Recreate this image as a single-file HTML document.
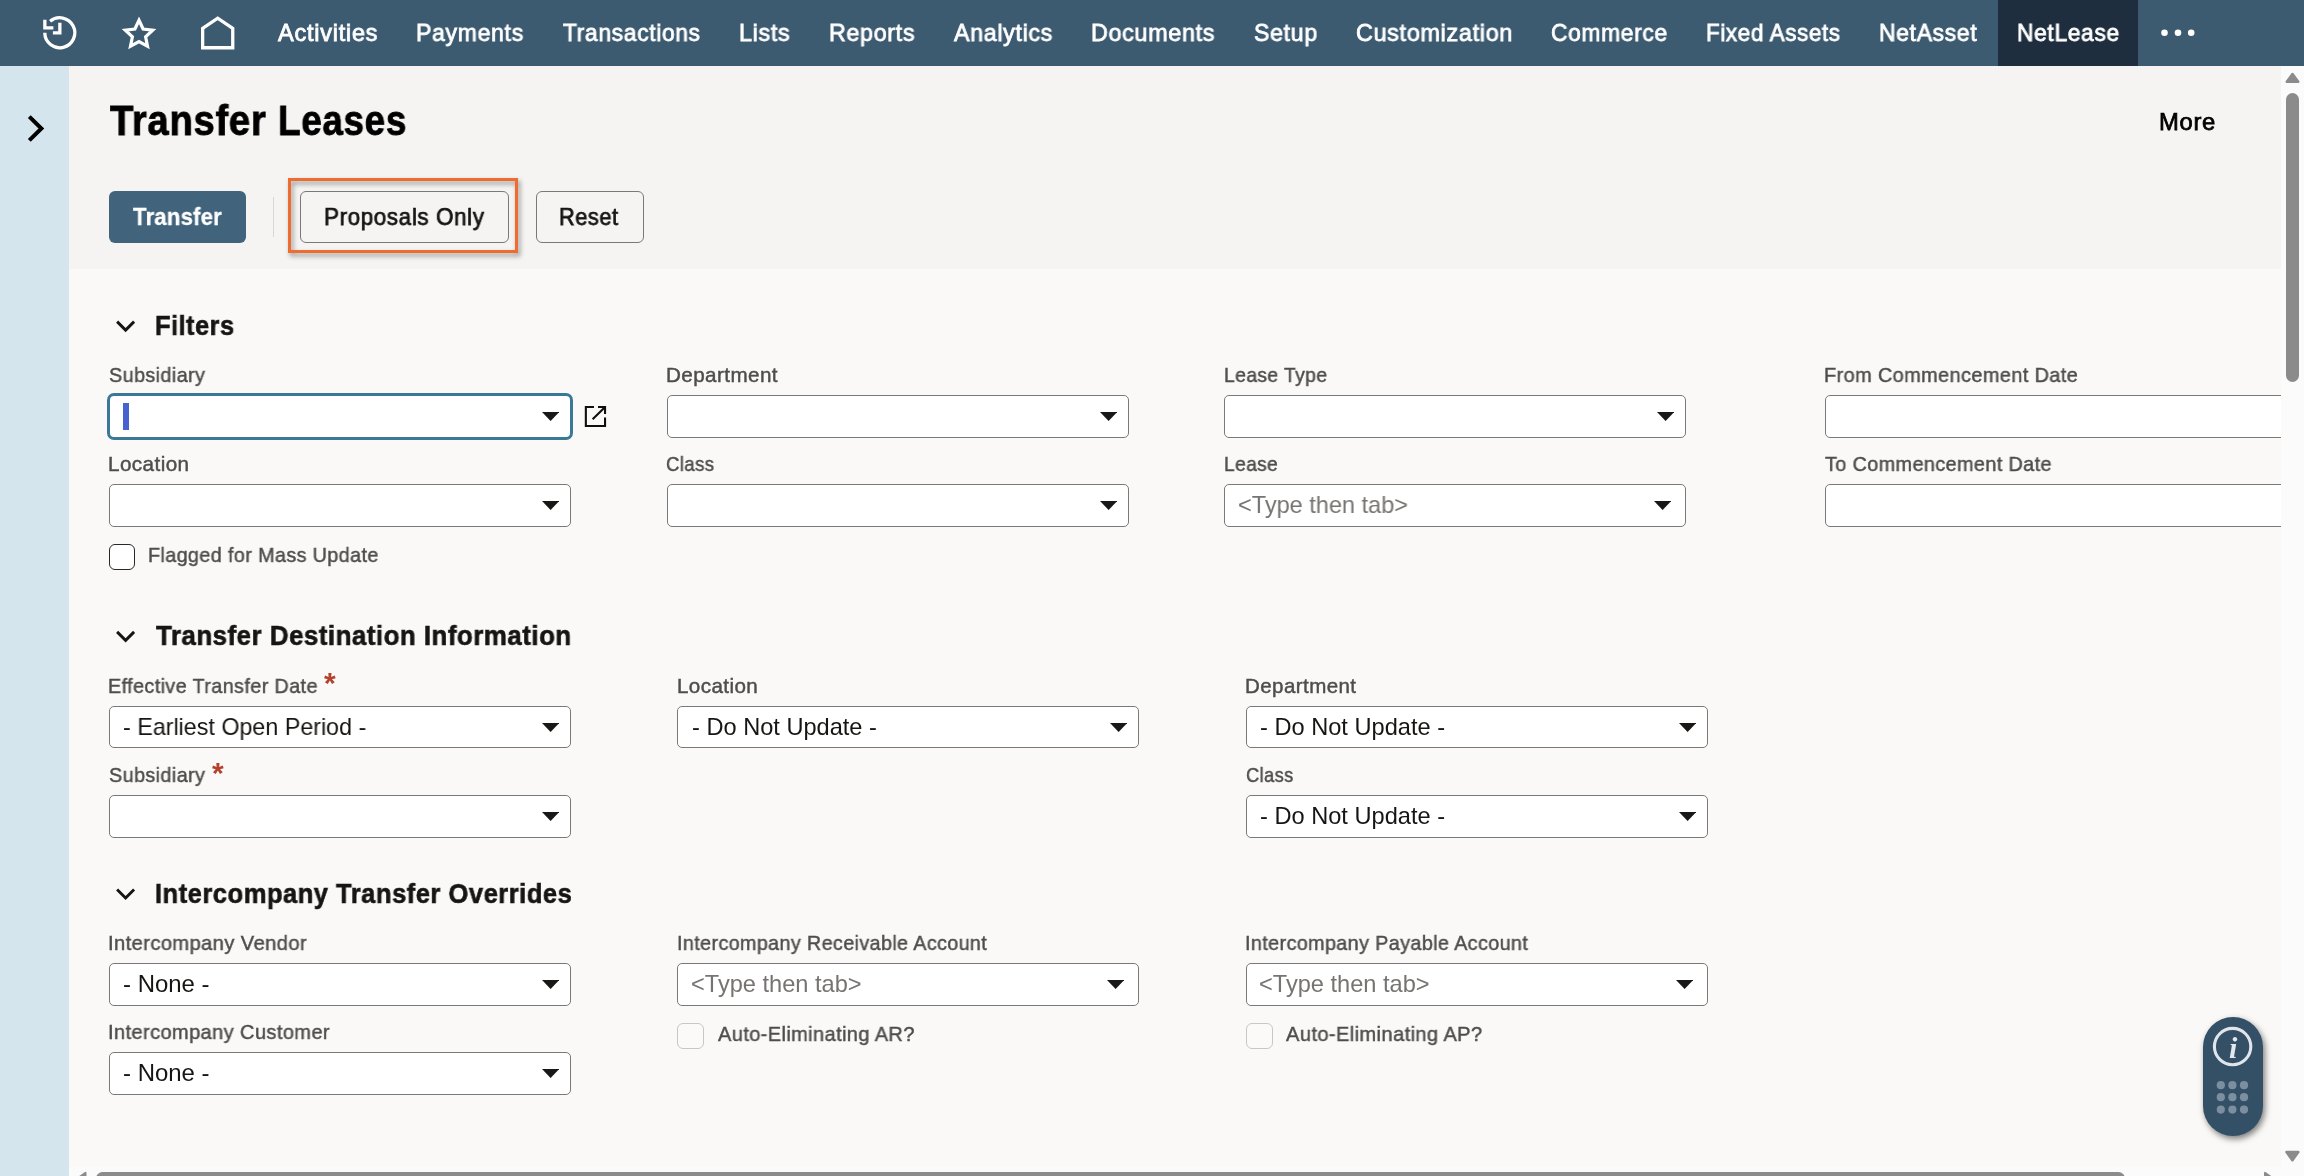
<!DOCTYPE html>
<html lang="en">
<head>
<meta charset="utf-8">
<title>Transfer Leases</title>
<style>
html,body{margin:0;padding:0;}
body{width:2304px;height:1176px;overflow:hidden;position:relative;background:#faf9f8;font-family:"Liberation Sans",sans-serif;}
.a{position:absolute;box-sizing:border-box;}
.t{position:absolute;white-space:pre;transform-origin:0 50%;will-change:transform;font-family:"Liberation Sans",sans-serif;}
#nav{left:0;top:0;width:2304px;height:66px;background:#3c5a70;}
#navact{left:1998px;top:0;width:140px;height:66px;background:#1f2e3f;}
#side{left:0;top:66px;width:69px;height:1110px;background:#d4e5ee;}
#head{left:69px;top:66px;width:2212px;height:203px;background:#f5f4f2;}
#main{left:69px;top:269px;width:2212px;height:898px;background:#faf9f8;overflow:hidden;}
.sel{width:462px;height:43px;background:#fff;border:1px solid #7b7977;border-radius:5px;}
.sel.focus{width:466px;height:47px;border:3px solid #3a7898;border-radius:7px;}
.btn{height:52px;top:191px;border-radius:6px;border:1px solid #7b7977;background:#f5f4f2;}
.cb{width:26px;height:26px;border-radius:6px;background:#fff;border:1.5px solid #2a2826;}
.cb.dis{width:27px;border:1px solid #c9c7c5;background:#fbfaf9;}
.ast{color:#b3412c;font-weight:700;font-size:30px;line-height:30px;}
</style>
</head>
<body>
<!-- top navigation -->
<div class="a" id="nav"></div>
<div class="a" id="navact"></div>
<svg class="a" style="left:40px;top:12px" width="42" height="42" viewBox="40 12 42 42" fill="none" stroke="#fff" stroke-width="3.3">
  <path d="M50.1 21.3 A15 15 0 1 1 44.8 32.8"/>
  <path d="M44.85 19.8V27.8H53.4"/>
  <path d="M59.85 22.7V32.95H52.9"/>
</svg>
<svg class="a" style="left:118px;top:12px" width="42" height="42" viewBox="118 12 42 42" fill="none" stroke="#fff" stroke-width="3.2" stroke-linejoin="miter">
  <path d="M139.0 20.2 L143.1 29.0 L152.7 30.2 L145.6 36.7 L147.5 46.2 L139.0 41.5 L130.5 46.2 L132.4 36.7 L125.3 30.2 L134.9 29.0 Z"/>
</svg>
<svg class="a" style="left:196px;top:12px" width="42" height="42" viewBox="196 12 42 42" fill="none" stroke="#fff" stroke-width="3.3" stroke-linejoin="miter">
  <path d="M202.65 47.75V28.3L217.7 18.2L232.75 28.3V47.75Z"/>
</svg>
<svg class="a" style="left:2158px;top:26px" width="40" height="14" viewBox="2158 26 40 14" fill="#fff">
  <circle cx="2164.5" cy="32.8" r="3.3"/><circle cx="2178" cy="32.8" r="3.3"/><circle cx="2191.2" cy="32.8" r="3.3"/>
</svg>

<!-- left rail -->
<div class="a" id="side"></div>
<svg class="a" style="left:22px;top:110px" width="28" height="38" viewBox="22 110 28 38" fill="none" stroke="#000" stroke-width="4">
  <path d="M29.3 116.6 L41.4 128.5 L29.3 140.4"/>
</svg>

<!-- page header -->
<div class="a" id="head"></div>
<div class="a" id="main"></div>
<div class="a" style="left:109px;top:191px;width:137px;height:52px;border-radius:6px;background:#41647c;"></div>
<div class="a" style="left:273px;top:197px;width:1px;height:40px;background:#d9d6d3;"></div>
<div class="a" style="left:288px;top:178px;width:230px;height:75px;border:3px solid #ee6c2f;filter:drop-shadow(2px 3px 2.5px rgba(0,0,0,.42));"></div>
<div class="a btn" style="left:300px;width:209px;"></div>
<div class="a btn" style="left:536px;width:108px;"></div>

<!-- section chevrons -->
<svg class="a" style="left:112px;top:316px" width="28" height="20" viewBox="112 316 28 20" fill="none" stroke="#161513" stroke-width="2.9"><path d="M117.1 321.6 L125.6 330.1 L134.1 321.6"/></svg>
<svg class="a" style="left:112px;top:626px" width="28" height="20" viewBox="112 626 28 20" fill="none" stroke="#161513" stroke-width="2.9"><path d="M117.1 631.9 L125.6 640.4 L134.1 631.9"/></svg>
<svg class="a" style="left:112px;top:884px" width="28" height="20" viewBox="112 884 28 20" fill="none" stroke="#161513" stroke-width="2.9"><path d="M117.1 889.5 L125.6 898.0 L134.1 889.5"/></svg>

<!-- form controls -->
<div class="a sel focus" style="left:107px;top:393px;"></div>
<svg class="a" style="left:541.8px;top:412px" width="17.2" height="9" viewBox="0 0 17.2 9"><path d="M0 0H17.2L8.6 9Z" fill="#1a1816"/></svg>
<div class="a sel" style="left:667px;top:395px;"></div>
<svg class="a" style="left:1099.8px;top:412px" width="17.2" height="9" viewBox="0 0 17.2 9"><path d="M0 0H17.2L8.6 9Z" fill="#1a1816"/></svg>
<div class="a sel" style="left:1224px;top:395px;"></div>
<svg class="a" style="left:1656.8px;top:412px" width="17.2" height="9" viewBox="0 0 17.2 9"><path d="M0 0H17.2L8.6 9Z" fill="#1a1816"/></svg>
<div class="a sel" style="left:109px;top:484px;"></div>
<svg class="a" style="left:541.8px;top:501px" width="17.2" height="9" viewBox="0 0 17.2 9"><path d="M0 0H17.2L8.6 9Z" fill="#1a1816"/></svg>
<div class="a sel" style="left:667px;top:484px;"></div>
<svg class="a" style="left:1099.8px;top:501px" width="17.2" height="9" viewBox="0 0 17.2 9"><path d="M0 0H17.2L8.6 9Z" fill="#1a1816"/></svg>
<div class="a sel" style="left:1224px;top:484px;"></div>
<svg class="a" style="left:1653.8px;top:501px" width="17.2" height="9" viewBox="0 0 17.2 9"><path d="M0 0H17.2L8.6 9Z" fill="#1a1816"/></svg>
<div class="a sel" style="left:109px;top:706px;height:42px;"></div>
<svg class="a" style="left:541.8px;top:723px" width="17.2" height="9" viewBox="0 0 17.2 9"><path d="M0 0H17.2L8.6 9Z" fill="#1a1816"/></svg>
<div class="a sel" style="left:677px;top:706px;height:42px;"></div>
<svg class="a" style="left:1109.8px;top:723px" width="17.2" height="9" viewBox="0 0 17.2 9"><path d="M0 0H17.2L8.6 9Z" fill="#1a1816"/></svg>
<div class="a sel" style="left:1246px;top:706px;height:42px;"></div>
<svg class="a" style="left:1678.8px;top:723px" width="17.2" height="9" viewBox="0 0 17.2 9"><path d="M0 0H17.2L8.6 9Z" fill="#1a1816"/></svg>
<div class="a sel" style="left:109px;top:795px;"></div>
<svg class="a" style="left:541.8px;top:812px" width="17.2" height="9" viewBox="0 0 17.2 9"><path d="M0 0H17.2L8.6 9Z" fill="#1a1816"/></svg>
<div class="a sel" style="left:1246px;top:795px;"></div>
<svg class="a" style="left:1678.8px;top:812px" width="17.2" height="9" viewBox="0 0 17.2 9"><path d="M0 0H17.2L8.6 9Z" fill="#1a1816"/></svg>
<div class="a sel" style="left:109px;top:963px;"></div>
<svg class="a" style="left:541.8px;top:980px" width="17.2" height="9" viewBox="0 0 17.2 9"><path d="M0 0H17.2L8.6 9Z" fill="#1a1816"/></svg>
<div class="a sel" style="left:677px;top:963px;"></div>
<svg class="a" style="left:1106.8px;top:980px" width="17.2" height="9" viewBox="0 0 17.2 9"><path d="M0 0H17.2L8.6 9Z" fill="#1a1816"/></svg>
<div class="a sel" style="left:1246px;top:963px;"></div>
<svg class="a" style="left:1675.8px;top:980px" width="17.2" height="9" viewBox="0 0 17.2 9"><path d="M0 0H17.2L8.6 9Z" fill="#1a1816"/></svg>
<div class="a sel" style="left:109px;top:1052px;"></div>
<svg class="a" style="left:541.8px;top:1069px" width="17.2" height="9" viewBox="0 0 17.2 9"><path d="M0 0H17.2L8.6 9Z" fill="#1a1816"/></svg>
<div class="a sel" style="left:1825px;top:395px;width:600px;"></div>
<div class="a sel" style="left:1825px;top:484px;width:600px;"></div>
<div class="a" style="left:123px;top:403px;width:6px;height:27px;background:#4863cf;"></div>
<svg class="a" style="left:583px;top:404px" width="26" height="26" viewBox="583 404 26 26" fill="none" stroke="#100f0e" stroke-width="2.1">
  <path d="M594 406.95H585.85V426H605.05V417.6"/>
  <path d="M598 406.95H605.05V414"/>
  <path d="M604.6 407.4L592.6 419.2"/>
</svg>
<div class="a cb" style="left:109px;top:544px;"></div>
<div class="a cb dis" style="left:677px;top:1023px;"></div>
<div class="a cb dis" style="left:1246px;top:1023px;"></div>
<span class="t ast" style="left:323.7px;top:668px;">*</span>
<span class="t ast" style="left:211.5px;top:758px;">*</span>

<!-- text -->
<span class="t" style="left:277.90px;top:18.57px;font-size:23.6px;line-height:28px;transform:scaleX(0.9985);color:#ffffff;letter-spacing:0.72px;-webkit-text-stroke:0.8px #ffffff;">Activities</span>
<span class="t" style="left:416.10px;top:18.57px;font-size:23.6px;line-height:28px;transform:scaleX(0.9749);color:#ffffff;letter-spacing:0.72px;-webkit-text-stroke:0.8px #ffffff;">Payments</span>
<span class="t" style="left:563.29px;top:18.57px;font-size:23.6px;line-height:28px;transform:scaleX(0.9639);color:#ffffff;letter-spacing:0.72px;-webkit-text-stroke:0.8px #ffffff;">Transactions</span>
<span class="t" style="left:739.08px;top:18.57px;font-size:23.6px;line-height:28px;transform:scaleX(0.9872);color:#ffffff;letter-spacing:0.72px;-webkit-text-stroke:0.8px #ffffff;">Lists</span>
<span class="t" style="left:828.59px;top:18.57px;font-size:23.6px;line-height:28px;transform:scaleX(0.9831);color:#ffffff;letter-spacing:0.72px;-webkit-text-stroke:0.8px #ffffff;">Reports</span>
<span class="t" style="left:953.90px;top:18.57px;font-size:23.6px;line-height:28px;transform:scaleX(0.9823);color:#ffffff;letter-spacing:0.72px;-webkit-text-stroke:0.8px #ffffff;">Analytics</span>
<span class="t" style="left:1091.08px;top:18.57px;font-size:23.6px;line-height:28px;transform:scaleX(0.9870);color:#ffffff;letter-spacing:0.72px;-webkit-text-stroke:0.8px #ffffff;">Documents</span>
<span class="t" style="left:1253.93px;top:18.57px;font-size:23.6px;line-height:28px;transform:scaleX(0.9776);color:#ffffff;letter-spacing:0.72px;-webkit-text-stroke:0.8px #ffffff;">Setup</span>
<span class="t" style="left:1355.81px;top:18.57px;font-size:23.6px;line-height:28px;transform:scaleX(0.9885);color:#ffffff;letter-spacing:0.72px;-webkit-text-stroke:0.8px #ffffff;">Customization</span>
<span class="t" style="left:1551.08px;top:18.57px;font-size:23.6px;line-height:28px;transform:scaleX(0.9647);color:#ffffff;letter-spacing:0.72px;-webkit-text-stroke:0.8px #ffffff;">Commerce</span>
<span class="t" style="left:1705.65px;top:18.57px;font-size:23.6px;line-height:28px;transform:scaleX(0.9467);color:#ffffff;letter-spacing:0.72px;-webkit-text-stroke:0.8px #ffffff;">Fixed Assets</span>
<span class="t" style="left:1879.41px;top:18.57px;font-size:23.6px;line-height:28px;transform:scaleX(0.9695);color:#ffffff;letter-spacing:0.72px;-webkit-text-stroke:0.8px #ffffff;">NetAsset</span>
<span class="t" style="left:2016.63px;top:18.57px;font-size:23.6px;line-height:28px;transform:scaleX(0.9626);color:#ffffff;letter-spacing:0.72px;-webkit-text-stroke:0.8px #ffffff;">NetLease</span>
<span class="t" style="left:110.40px;top:96.45px;font-size:42px;line-height:50px;transform:scaleX(0.9119);color:#000000;letter-spacing:0.72px;font-weight:700;-webkit-text-stroke:0.8px #000000;">Transfer</span>
<span class="t" style="left:277.99px;top:96.45px;font-size:42px;line-height:50px;transform:scaleX(0.8785);color:#000000;letter-spacing:0.72px;font-weight:700;-webkit-text-stroke:0.8px #000000;">Leases</span>
<span class="t" style="left:2158.82px;top:107.82px;font-size:23.6px;line-height:28px;transform:scaleX(1.0086);color:#000000;letter-spacing:0.68px;-webkit-text-stroke:0.75px #000000;">More</span>
<span class="t" style="left:133.15px;top:202.62px;font-size:23.6px;line-height:28px;transform:scaleX(0.9341);color:#ffffff;letter-spacing:0.27px;font-weight:700;-webkit-text-stroke:0.3px #ffffff;">Transfer</span>
<span class="t" style="left:324.23px;top:202.62px;font-size:23.6px;line-height:28px;transform:scaleX(0.9478);color:#161513;letter-spacing:0.68px;-webkit-text-stroke:0.75px #161513;">Proposals Only</span>
<span class="t" style="left:559.48px;top:202.62px;font-size:23.6px;line-height:28px;transform:scaleX(0.9179);color:#161513;letter-spacing:0.68px;-webkit-text-stroke:0.75px #161513;">Reset</span>
<span class="t" style="left:155.22px;top:309.08px;font-size:27.2px;line-height:33px;transform:scaleX(0.9322);color:#161513;letter-spacing:0.54px;font-weight:700;-webkit-text-stroke:0.6px #161513;">Filters</span>
<span class="t" style="left:156.05px;top:619.28px;font-size:27.2px;line-height:33px;transform:scaleX(0.9508);color:#161513;letter-spacing:0.54px;font-weight:700;-webkit-text-stroke:0.6px #161513;">Transfer Destination Information</span>
<span class="t" style="left:155.30px;top:877.08px;font-size:27.2px;line-height:33px;transform:scaleX(0.9390);color:#161513;letter-spacing:0.54px;font-weight:700;-webkit-text-stroke:0.6px #161513;">Intercompany Transfer Overrides</span>
<span class="t" style="left:109.11px;top:362.97px;font-size:20.3px;line-height:24px;transform:scaleX(0.9745);color:#4f4d4b;letter-spacing:0.41px;-webkit-text-stroke:0.45px #4f4d4b;">Subsidiary</span>
<span class="t" style="left:665.61px;top:362.97px;font-size:20.3px;line-height:24px;transform:scaleX(1.0172);color:#4f4d4b;letter-spacing:0.41px;-webkit-text-stroke:0.45px #4f4d4b;">Department</span>
<span class="t" style="left:1223.72px;top:362.97px;font-size:20.3px;line-height:24px;transform:scaleX(0.9515);color:#4f4d4b;letter-spacing:0.41px;-webkit-text-stroke:0.45px #4f4d4b;">Lease Type</span>
<span class="t" style="left:1824.17px;top:362.97px;font-size:20.3px;line-height:24px;transform:scaleX(0.9806);color:#4f4d4b;letter-spacing:0.41px;-webkit-text-stroke:0.45px #4f4d4b;">From Commencement Date</span>
<span class="t" style="left:108.11px;top:451.97px;font-size:20.3px;line-height:24px;transform:scaleX(1.0188);color:#4f4d4b;letter-spacing:0.41px;-webkit-text-stroke:0.45px #4f4d4b;">Location</span>
<span class="t" style="left:666.35px;top:451.97px;font-size:20.3px;line-height:24px;transform:scaleX(0.9164);color:#4f4d4b;letter-spacing:0.41px;-webkit-text-stroke:0.45px #4f4d4b;">Class</span>
<span class="t" style="left:1223.73px;top:451.97px;font-size:20.3px;line-height:24px;transform:scaleX(0.9455);color:#4f4d4b;letter-spacing:0.41px;-webkit-text-stroke:0.45px #4f4d4b;">Lease</span>
<span class="t" style="left:1825.42px;top:451.97px;font-size:20.3px;line-height:24px;transform:scaleX(0.9761);color:#4f4d4b;letter-spacing:0.41px;-webkit-text-stroke:0.45px #4f4d4b;">To Commencement Date</span>
<span class="t" style="left:147.68px;top:542.97px;font-size:20.3px;line-height:24px;transform:scaleX(0.9728);color:#4f4d4b;letter-spacing:0.41px;-webkit-text-stroke:0.45px #4f4d4b;">Flagged for Mass Update</span>
<span class="t" style="left:108.18px;top:673.97px;font-size:20.3px;line-height:24px;transform:scaleX(0.9745);color:#4f4d4b;letter-spacing:0.41px;-webkit-text-stroke:0.45px #4f4d4b;">Effective Transfer Date</span>
<span class="t" style="left:676.61px;top:673.97px;font-size:20.3px;line-height:24px;transform:scaleX(1.0155);color:#4f4d4b;letter-spacing:0.41px;-webkit-text-stroke:0.45px #4f4d4b;">Location</span>
<span class="t" style="left:1245.12px;top:673.97px;font-size:20.3px;line-height:24px;transform:scaleX(1.0126);color:#4f4d4b;letter-spacing:0.41px;-webkit-text-stroke:0.45px #4f4d4b;">Department</span>
<span class="t" style="left:109.11px;top:762.97px;font-size:20.3px;line-height:24px;transform:scaleX(0.9745);color:#4f4d4b;letter-spacing:0.41px;-webkit-text-stroke:0.45px #4f4d4b;">Subsidiary</span>
<span class="t" style="left:1245.87px;top:762.97px;font-size:20.3px;line-height:24px;transform:scaleX(0.9017);color:#4f4d4b;letter-spacing:0.41px;-webkit-text-stroke:0.45px #4f4d4b;">Class</span>
<span class="t" style="left:108.15px;top:930.97px;font-size:20.3px;line-height:24px;transform:scaleX(0.9923);color:#4f4d4b;letter-spacing:0.41px;-webkit-text-stroke:0.45px #4f4d4b;">Intercompany Vendor</span>
<span class="t" style="left:676.68px;top:930.97px;font-size:20.3px;line-height:24px;transform:scaleX(0.9713);color:#4f4d4b;letter-spacing:0.41px;-webkit-text-stroke:0.45px #4f4d4b;">Intercompany Receivable Account</span>
<span class="t" style="left:1245.18px;top:930.97px;font-size:20.3px;line-height:24px;transform:scaleX(0.9730);color:#4f4d4b;letter-spacing:0.41px;-webkit-text-stroke:0.45px #4f4d4b;">Intercompany Payable Account</span>
<span class="t" style="left:108.16px;top:1019.97px;font-size:20.3px;line-height:24px;transform:scaleX(0.9866);color:#4f4d4b;letter-spacing:0.41px;-webkit-text-stroke:0.45px #4f4d4b;">Intercompany Customer</span>
<span class="t" style="left:717.73px;top:1021.72px;font-size:20.3px;line-height:24px;transform:scaleX(0.9846);color:#4f4d4b;letter-spacing:0.41px;-webkit-text-stroke:0.45px #4f4d4b;">Auto-Eliminating AR?</span>
<span class="t" style="left:1285.97px;top:1021.72px;font-size:20.3px;line-height:24px;transform:scaleX(0.9889);color:#4f4d4b;letter-spacing:0.41px;-webkit-text-stroke:0.45px #4f4d4b;">Auto-Eliminating AP?</span>
<span class="t" style="left:123.02px;top:712.82px;font-size:23.6px;line-height:28px;transform:scaleX(0.9867);color:#161513;">- Earliest Open Period -</span>
<span class="t" style="left:691.76px;top:712.82px;font-size:23.6px;line-height:28px;transform:scaleX(0.9995);color:#161513;">- Do Not Update -</span>
<span class="t" style="left:1259.76px;top:712.82px;font-size:23.6px;line-height:28px;transform:scaleX(1.0008);color:#161513;">- Do Not Update -</span>
<span class="t" style="left:1259.76px;top:801.82px;font-size:23.6px;line-height:28px;transform:scaleX(1.0008);color:#161513;">- Do Not Update -</span>
<span class="t" style="left:123.00px;top:970.32px;font-size:23.6px;line-height:28px;transform:scaleX(1.0160);color:#161513;">- None -</span>
<span class="t" style="left:123.00px;top:1059.32px;font-size:23.6px;line-height:28px;transform:scaleX(1.0160);color:#161513;">- None -</span>
<span class="t" style="left:1238.40px;top:490.82px;font-size:23.6px;line-height:28px;transform:scaleX(0.9964);color:#767472;">&lt;Type then tab&gt;</span>
<span class="t" style="left:691.40px;top:970.32px;font-size:23.6px;line-height:28px;transform:scaleX(0.9979);color:#767472;">&lt;Type then tab&gt;</span>
<span class="t" style="left:1259.40px;top:970.32px;font-size:23.6px;line-height:28px;transform:scaleX(0.9979);color:#767472;">&lt;Type then tab&gt;</span>

<!-- scrollbars -->
<div class="a" style="left:2281px;top:66px;width:23px;height:1110px;background:#fbfbfb;"></div>
<div class="a" style="left:69px;top:1167px;width:2235px;height:9px;background:#fbfbfb;"></div>
<div class="a" style="left:2286px;top:93px;width:13px;height:289px;border-radius:6.5px;background:#8b8b8b;"></div>
<div class="a" style="left:96px;top:1172px;width:2029px;height:13px;border-radius:6.5px;background:#8b8b8b;"></div>
<svg class="a" style="left:2284px;top:70px" width="18" height="16" viewBox="2284 70 18 16" fill="#8b8b8b" stroke="#8b8b8b" stroke-width="2.6" stroke-linejoin="round"><path d="M2292.5 74 L2298.2 81.8 L2286.8 81.8 Z"/></svg>
<svg class="a" style="left:2284px;top:1148px" width="18" height="16" viewBox="2284 1148 18 16" fill="#8b8b8b" stroke="#8b8b8b" stroke-width="2.6" stroke-linejoin="round"><path d="M2292.4 1160.2 L2298.3 1152 L2286.5 1152 Z"/></svg>
<svg class="a" style="left:74px;top:1168px" width="16" height="8" viewBox="74 1168 16 8" fill="#8b8b8b" stroke="#8b8b8b" stroke-width="2" stroke-linejoin="round"><path d="M77.5 1178.5 L85.5 1172.8 L85.5 1184 Z"/></svg>
<svg class="a" style="left:2260px;top:1168px" width="18" height="8" viewBox="2260 1168 18 8" fill="#8b8b8b" stroke="#8b8b8b" stroke-width="2" stroke-linejoin="round"><path d="M2273 1178.5 L2265 1172.8 L2265 1184 Z"/></svg>

<!-- floating help pill -->
<div class="a" style="left:2203px;top:1017px;width:60px;height:119px;border-radius:30px;background:#345067;box-shadow:2px 3px 6px rgba(0,0,0,.5);"></div>
<svg class="a" style="left:2203px;top:1017px" width="60" height="119" viewBox="2203 1017 60 119">
  <circle cx="2232.6" cy="1046.6" r="18.2" fill="none" stroke="#dfe5ea" stroke-width="3.1"/>
  <g fill="#7b8fa0">
    <circle cx="2220.8" cy="1085.2" r="4.1"/><circle cx="2232.4" cy="1085.2" r="4.1"/><circle cx="2244" cy="1085.2" r="4.1"/>
    <circle cx="2220.8" cy="1097.2" r="4.1"/><circle cx="2232.4" cy="1097.2" r="4.1"/><circle cx="2244" cy="1097.2" r="4.1"/>
    <circle cx="2220.8" cy="1109.6" r="4.1"/><circle cx="2232.4" cy="1109.6" r="4.1"/><circle cx="2244" cy="1109.6" r="4.1"/>
  </g>
</svg>
<span class="t" style="left:2228.5px;top:1030.5px;font-family:'Liberation Serif',serif;font-style:italic;font-weight:700;font-size:30px;line-height:34px;color:#e3e8ec;">i</span>
</body>
</html>
